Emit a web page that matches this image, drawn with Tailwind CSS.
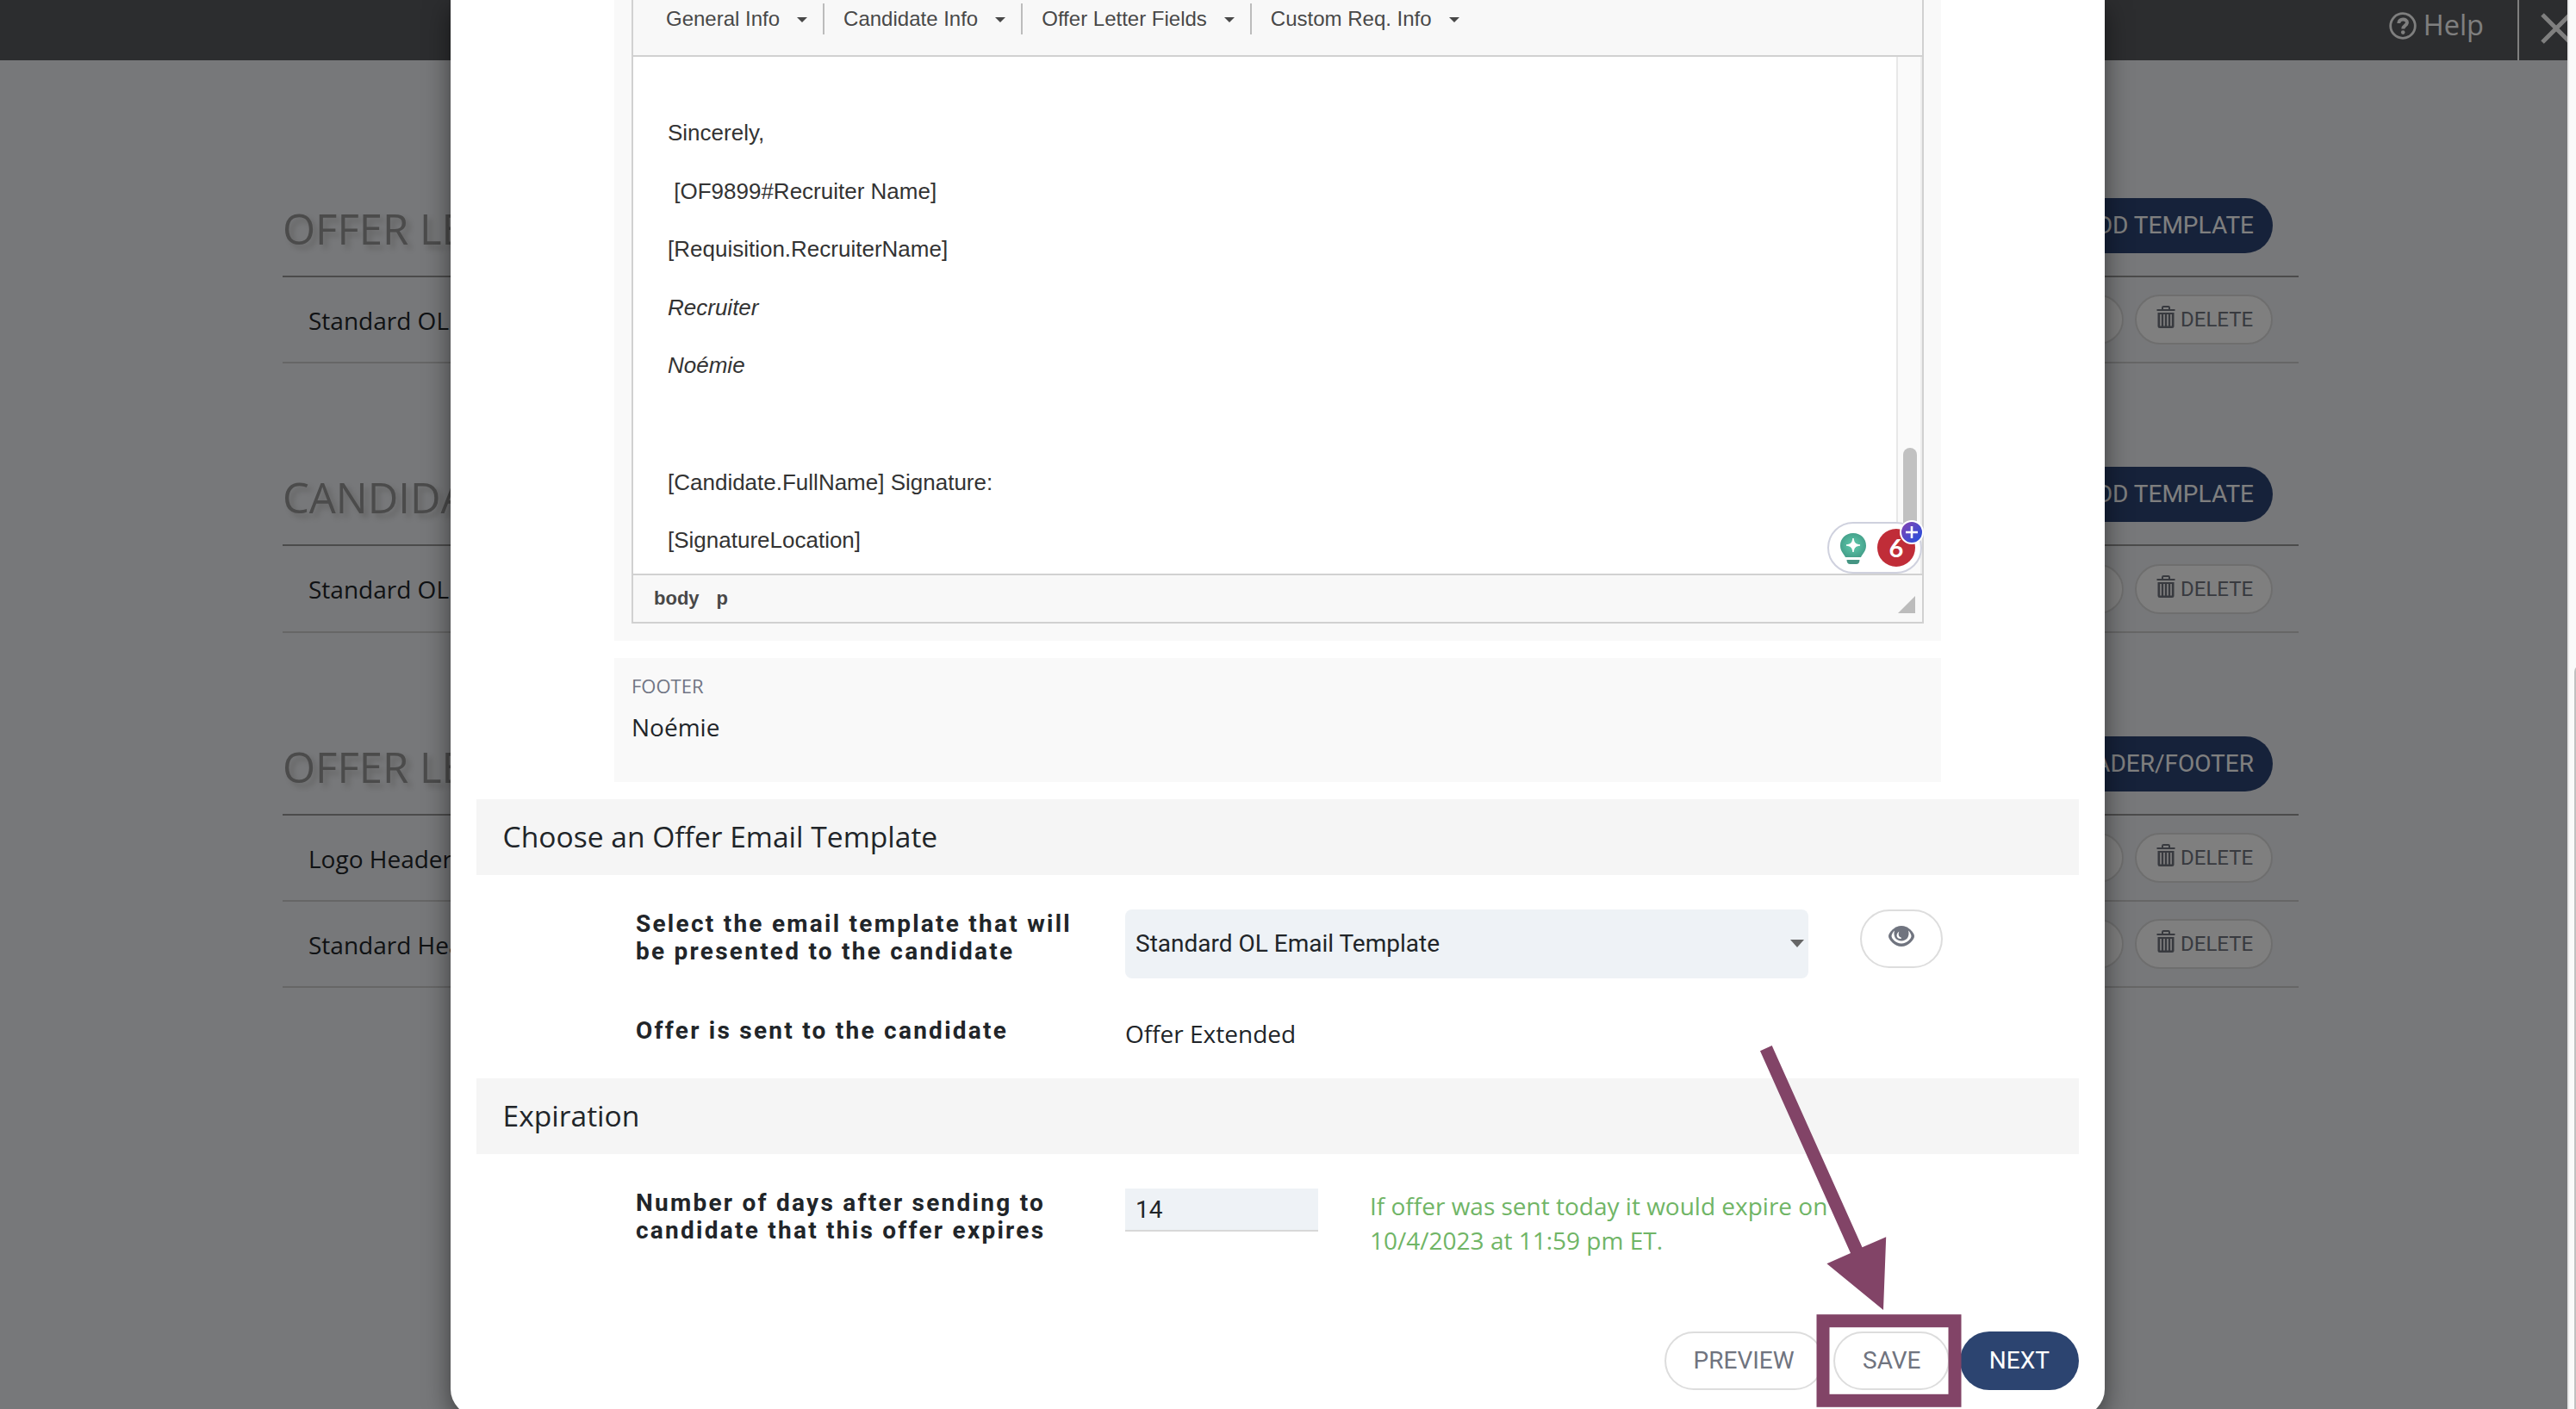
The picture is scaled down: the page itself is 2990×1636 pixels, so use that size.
<!-- index.html - offer letter template editor, modal over the template list -->
<!DOCTYPE html>
<html lang="en">
<head>
  <meta charset="UTF-8" />
  <meta name="viewport" content="width=device-width, initial-scale=1.0" />
  <title>Offer Letter Templates</title>
  <script src="https://cdn.jsdelivr.net/npm/@tailwindcss/browser@4"></script>
</head>
<body class="relative w-[2990px] h-[1636px] overflow-hidden bg-[#fafafa] font-['Open_Sans',sans-serif] text-[28px] text-[#212529]">

  <!-- shared icons -->
  <svg class="hidden">
    <symbol id="trash" viewBox="0 0 22 26">
      <path d="M0.5 5h21M7 4.5V2.2Q7 1 8.2 1h5.6Q15 1 15 2.2V4.5" fill="none" stroke="currentColor" stroke-width="2" />
      <path d="M1.5 8h19v15.500q0 2.500-2.500 2.500h-14q-2.500 0-2.500-2.500z" fill="currentColor" />
      <path d="M5 10v13.500M9 10v13.500M13 10v13.500M17 10v13.500" stroke="#fff" stroke-width="1.700" />
    </symbol>
  </svg>

  <!-- page behind the modal -->
  <div class="relative w-[2980px] h-[1636px] overflow-hidden bg-[#eef0f4]">
    <header class="flex justify-end h-[70px] bg-[#585b5e]">
      <div class="flex items-center gap-[8px] h-[59px] mr-[39px] text-[32.5px] text-white">
        <svg class="size-8" viewBox="0 0 32 32" fill="none" stroke="currentColor">
          <circle cx="16" cy="16" r="14.300" stroke-width="2.800" />
          <path d="M11.300 13c0-6 9.600-6 9.600-.8 0 3.600-4.600 3.300-4.600 7.300" stroke-width="4" />
          <circle cx="16.200" cy="23.600" r="2.300" fill="currentColor" stroke="none" />
        </svg>
        <span>Help</span>
      </div>
      <div class="w-[58px] border-l-2 border-white overflow-hidden">
        <svg class="w-[36px] h-[36px] ml-[25px] mt-[15px]" viewBox="0 0 36 36" stroke="#fff" stroke-width="5">
          <path d="M2 2L34 34M34 2L2 34" />
        </svg>
      </div>
    </header>

    <main class="w-[2340px] ml-[328px] pt-[160px]">
      <section class="mb-[120px]">
        <div class="flex justify-between items-center h-[92px] pb-[26px] pr-[30px] border-b-2 border-[#969696]">
          <h2 class="mt-1.5 text-[49px] leading-[64px] text-[#969696] [text-shadow:5px_5px_6px_#c8c8c8]">OFFER LETTER</h2>
          <button class="h-[64px] px-[22px] rounded-full bg-[#2c4474] font-[Roboto] text-white">ADD TEMPLATE</button>
        </div>
        <div class="flex items-center h-[100px] pl-[30px] pr-[30px] border-b-2 border-[#ccc]">
          <span class="pt-[2px] mr-auto">Standard OL</span>
          <span class="w-[120px] h-[58px] mr-[13px] rounded-full border-2 border-[#ddd] bg-white"></span>
          <button class="flex items-center w-[160px] h-[58px] pl-[23px] gap-[6px] rounded-full border-2 border-[#ddd] bg-white font-[Roboto] text-[24px] text-[#70747f]">
            <svg class="w-[22px] h-[26px] mb-1.5"><use href="#trash" /></svg>DELETE
          </button>
        </div>
      </section>

      <section class="mb-[120px]">
        <div class="flex justify-between items-center h-[92px] pb-[26px] pr-[30px] border-b-2 border-[#969696]">
          <h2 class="mt-1.5 text-[49px] leading-[64px] text-[#969696] [text-shadow:5px_5px_6px_#c8c8c8]">CANDIDATE</h2>
          <button class="h-[64px] px-[22px] rounded-full bg-[#2c4474] font-[Roboto] text-white">ADD TEMPLATE</button>
        </div>
        <div class="flex items-center h-[101px] pl-[30px] pr-[30px] border-b-2 border-[#ccc]">
          <span class="mr-auto">Standard OL</span>
          <span class="w-[120px] h-[58px] mr-[13px] rounded-full border-2 border-[#ddd] bg-white"></span>
          <button class="flex items-center w-[160px] h-[58px] pl-[23px] gap-[6px] rounded-full border-2 border-[#ddd] bg-white font-[Roboto] text-[24px] text-[#70747f]">
            <svg class="w-[22px] h-[26px] mb-1.5"><use href="#trash" /></svg>DELETE
          </button>
        </div>
      </section>

      <section>
        <div class="flex justify-between items-center h-[92px] pb-[26px] pr-[30px] border-b-2 border-[#969696]">
          <h2 class="mt-1.5 text-[49px] leading-[64px] text-[#969696] [text-shadow:5px_5px_6px_#c8c8c8]">OFFER LETTER</h2>
          <button class="h-[64px] px-[22px] rounded-full bg-[#2c4474] font-[Roboto] text-white">ADD HEADER/FOOTER</button>
        </div>
        <div class="flex items-center h-[100px] pl-[30px] pr-[30px] border-b-2 border-[#ccc]">
          <span class="pt-[2px] mr-auto">Logo Header</span>
          <span class="w-[120px] h-[58px] mr-[13px] rounded-full border-2 border-[#ddd] bg-white"></span>
          <button class="flex items-center w-[160px] h-[58px] pl-[23px] gap-[6px] rounded-full border-2 border-[#ddd] bg-white font-[Roboto] text-[24px] text-[#70747f]">
            <svg class="w-[22px] h-[26px] mb-1.5"><use href="#trash" /></svg>DELETE
          </button>
        </div>
        <div class="flex items-center h-[100px] pl-[30px] pr-[30px] border-b-2 border-[#ccc]">
          <span class="pt-[2px] mr-auto">Standard Header</span>
          <span class="w-[120px] h-[58px] mr-[13px] rounded-full border-2 border-[#ddd] bg-white"></span>
          <button class="flex items-center w-[160px] h-[58px] pl-[23px] gap-[6px] rounded-full border-2 border-[#ddd] bg-white font-[Roboto] text-[24px] text-[#70747f]">
            <svg class="w-[22px] h-[26px] mb-1.5"><use href="#trash" /></svg>DELETE
          </button>
        </div>
      </section>
    </main>

    <div class="absolute inset-0 bg-black/50"></div>
  </div>

  <!-- page scrollbar -->
  <div class="absolute top-0 left-[2980px] w-[30px] h-[1636px] border-l-2 border-[#e8e8e8] bg-[#fafafa]">
    <div class="w-4 h-[900px] mt-[772px] ml-[6px] rounded-full bg-[#c1c1c1]"></div>
  </div>

  <!-- modal -->
  <div class="absolute top-0 left-[523px] w-[1920px] h-[1644px] px-[30px] rounded-b-[31px] bg-white shadow-[0_10px_30px_rgba(0,0,0,0.5)]">

    <div class="mx-[160px] px-[20px] h-[744px] bg-[#f9f9f9]">
      <div class="relative h-[724px] border-x-2 border-b-2 border-[#d1d1d1] bg-white font-['Liberation_Sans',Arial,sans-serif]">
        <div class="h-[66px] border-b-2 border-[#d1d1d1] bg-[#f8f8f8]">
          <div class="flex items-center h-[44px] pl-[38px] text-[24px] text-[#484848]">
            <span>General Info</span>
            <svg class="w-3 h-[6px] ml-5 mt-[2px]" viewBox="0 0 12 6" fill="#484848"><path d="M0 0h12L6 6z" /></svg>
            <span class="w-[2px] h-9 ml-[18px] mr-[22px] bg-[#bcbcbc]"></span>
            <span>Candidate Info</span>
            <svg class="w-3 h-[6px] ml-5 mt-[2px]" viewBox="0 0 12 6" fill="#484848"><path d="M0 0h12L6 6z" /></svg>
            <span class="w-[2px] h-9 ml-[18px] mr-[22px] bg-[#bcbcbc]"></span>
            <span>Offer Letter Fields</span>
            <svg class="w-3 h-[6px] ml-5 mt-[2px]" viewBox="0 0 12 6" fill="#484848"><path d="M0 0h12L6 6z" /></svg>
            <span class="w-[2px] h-9 ml-[18px] mr-[22px] bg-[#bcbcbc]"></span>
            <span>Custom Req. Info</span>
            <svg class="w-3 h-[6px] ml-5 mt-[2px]" viewBox="0 0 12 6" fill="#484848"><path d="M0 0h12L6 6z" /></svg>
          </div>
        </div>

        <div class="flex h-[602px] border-b-2 border-[#d1d1d1]">
          <div class="flex flex-col grow gap-[26px] pt-[68px] pl-[40px] text-[26px] leading-[41.6px] text-[#333] overflow-hidden">
            <p>Sincerely,</p>
            <p>&nbsp;[OF9899#Recruiter Name]</p>
            <p>[Requisition.RecruiterName]</p>
            <p class="italic">Recruiter</p>
            <p class="italic">Noémie</p>
            <p>&nbsp;</p>
            <p>[Candidate.FullName] Signature:</p>
            <p>[SignatureLocation]</p>
          </div>
          <div class="w-[30px] border-l-2 border-r-2 border-l-[#e8e8e8] border-r-[#ededed] bg-[#fafafa]">
            <div class="w-4 h-[120px] mt-[454px] ml-[6px] rounded-full bg-[#c1c1c1]"></div>
          </div>
        </div>

        <div class="flex items-center gap-[20px] h-[54px] pl-[24px] pb-[2px] bg-[#f8f8f8] text-[22px] font-bold text-[#484848]">
          <span>body</span>
          <span>p</span>
          <svg class="size-5 ml-auto self-end mr-[8px] mb-[8px]" viewBox="0 0 20 20" fill="#bcbcbc"><path d="M20 0v20H0z" /></svg>
        </div>

        <!-- writing assistant widget -->
        <div class="absolute top-[606px] right-0 w-[110px] h-[60px] rounded-full border-2 border-[#cfd1de] bg-white">
          <svg class="absolute top-[6px] left-[10px] w-[38px] h-[44px]" viewBox="0 0 38 44">
            <defs>
              <radialGradient id="bulb"><stop offset="0.3" stop-color="#58c0a4" /><stop offset="1" stop-color="#46a28c" /></radialGradient>
            </defs>
            <path d="M18 5c9 0 15 6.500 15 14.500 0 6-3.500 9-6 13.500H9C6.500 28.500 3 25.500 3 19.500 3 11.500 9 5 18 5z" fill="url(#bulb)" />
            <path d="M18 11c1.200 5.500 2.500 6.800 8 8-5.500 1.200-6.800 2.500-8 8-1.200-5.500-2.500-6.800-8-8 5.500-1.200 6.800-2.500 8-8z" fill="#fff" stroke="#fff" />
            <path d="M10.500 36h15q0 5-4 5h-7q-4 0-4-5z" fill="#459583" />
          </svg>
          <div class="absolute top-[6px] right-[6px] size-11 rounded-full bg-[#c02d38] text-center font-[Lato] font-bold text-[29px] leading-[43px] text-white">6</div>
          <svg class="absolute top-[-4px] right-[-4px] size-7" viewBox="0 0 28 28">
            <defs>
              <linearGradient id="plus" x1="0" y1="0" x2="1" y2="1"><stop offset="0.1" stop-color="#8145b4" /><stop offset="0.9" stop-color="#254edd" /></linearGradient>
            </defs>
            <circle cx="14" cy="14" r="13" fill="url(#plus)" stroke="#fff" stroke-width="2" />
            <path d="M14 7v14M7 14h14" stroke="#fff" stroke-width="2.600" />
          </svg>
        </div>
      </div>
    </div>

    <div class="mx-[160px] mt-5 px-[20px] pt-4 h-[144px] bg-[#f9f9f9]">
      <p class="text-[22px] leading-8 text-[#707584]">FOOTER</p>
      <p class="mt-3 leading-10">Noémie</p>
    </div>

    <h3 class="mt-5 h-[88px] pl-[30.500px] bg-[#f5f5f5] text-[33.6px] leading-[86px]">Choose an Offer Email Template</h3>

    <div class="flex mt-10 pl-[185px]">
      <label class="w-[568px] pt-px font-[Roboto] font-bold leading-8 tracking-[2.250px]">Select the email template that will<br>be presented to the candidate</label>
      <div class="flex items-center justify-between w-[793px] h-[80px] pl-3 pr-[5px] rounded-lg bg-[#eef2f6] font-[Roboto]">
        <span>Standard OL Email Template</span>
        <svg class="w-4 h-[9px] mb-[2px]" viewBox="0 0 16 9" fill="#666"><path d="M0 0h16L8 9z" /></svg>
      </div>
      <button class="flex items-center justify-center w-[96px] h-[68px] ml-[60px] pb-[6px] rounded-full border-2 border-[#ddd] bg-white">
        <svg class="w-[30px] h-[24px]" viewBox="0 0 30 24">
          <path d="M15 0C23 0 30 8 30 12s-7 12-15 12S0 16 0 12 7 0 15 0z" fill="#70747f" />
          <path d="M7 5.500C4.500 8 3.500 10.500 3.500 12c0 2.500 5 8.500 11.500 8.500S26.500 14.500 26.500 12c0-1.500-1-4-3.500-6.500 2 7-2 12-8 12s-10-5-8-12z" fill="#fff" />
          <path d="M12.500 6.500c-5 3.500-3 8.500 1.500 8.500 1 0 1.500-1 .5-1.500-3-1-3.500-4-2-7z" fill="#fff" />
        </svg>
      </button>
    </div>

    <div class="flex mt-11 pl-[185px]">
      <label class="w-[568px] pt-px font-[Roboto] font-bold leading-8 tracking-[2.250px]">Offer is sent to the candidate</label>
      <span class="leading-10">Offer Extended</span>
    </div>

    <h3 class="mt-8 h-[88px] pl-[30.500px] bg-[#f5f5f5] text-[33.6px] leading-[86px]">Expiration</h3>

    <div class="flex h-[80px] mt-10 pl-[185px]">
      <label class="w-[568px] pt-px font-[Roboto] font-bold leading-8 tracking-[2.250px]">Number of days after sending to<br>candidate that this offer expires</label>
      <div class="w-[224px] h-[50px] pl-3 border-b-2 border-[#d8d8d8] bg-[#eef2f6] font-[Roboto] leading-[50px]">14</div>
      <p class="ml-[60px] leading-10 text-[#70b566]">If offer was sent today it would expire on<br>10/4/2023 at 11:59 pm ET.</p>
    </div>

    <div class="flex justify-end gap-[11.400px] mt-[86px] font-[Roboto] text-[#70747f]">
      <button class="h-[68px] px-8 rounded-full border-2 border-[#ddd] bg-white">PREVIEW</button>
      <button class="h-[68px] px-8 rounded-full border-2 border-[#ddd] bg-white">SAVE</button>
      <button class="h-[68px] px-[34px] rounded-full bg-[#2c4470] text-white">NEXT</button>
    </div>
  </div>

  <!-- callout arrow and box around SAVE -->
  <svg class="absolute inset-0 w-[2990px] h-[1636px]" viewBox="0 0 2990 1636">
    <path d="M2043 1220.300L2056.700 1214 2161.500 1448.300 2189.200 1436.300 2186 1521 2120.400 1467.300 2148 1455z" fill="#824467" />
    <rect x="2116" y="1533.700" width="153" height="92.600" fill="none" stroke="#824467" stroke-width="15" />
  </svg>
</body>
</html>
